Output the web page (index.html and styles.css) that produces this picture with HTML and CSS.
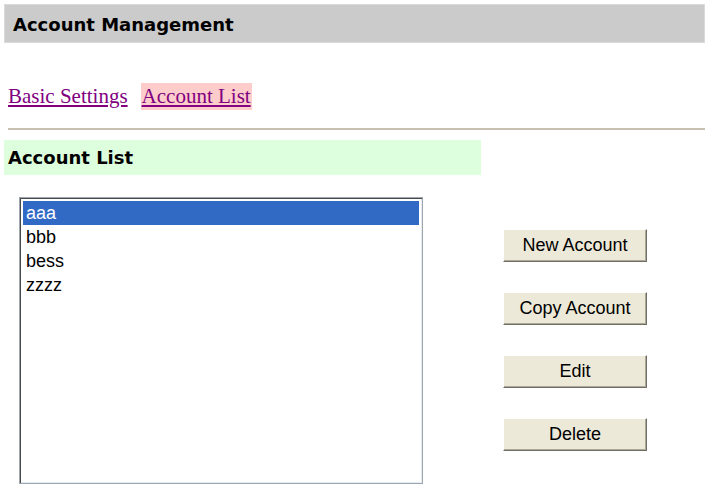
FILE: index.html
```html
<!DOCTYPE html>
<html>
<head>
<meta charset="utf-8">
<title>Account Management</title>
<link rel="stylesheet" href="styles.css">
</head>
<body>
<div class="header">Account Management</div>
<nav class="tabs">
  <a href="#" class="tab">Basic Settings</a>
  <a href="#" class="tab tab-active">Account List</a>
</nav>
<div class="rule"></div>
<div class="section-title">Account List</div>
<div class="content">
  <div class="listbox">
    <div class="item item-selected">aaa</div>
    <div class="item">bbb</div>
    <div class="item">bess</div>
    <div class="item">zzzz</div>
  </div>
  <div class="actions">
    <button class="btn">New Account</button>
    <button class="btn">Copy Account</button>
    <button class="btn">Edit</button>
    <button class="btn">Delete</button>
  </div>
</div>
</body>
</html>
```
FILE: styles.css
```css
html, body {
  margin: 0;
  padding: 0;
  background: #ffffff;
}

body {
  width: 707px;
  height: 489px;
  overflow: hidden;
  font-family: "DejaVu Sans", Verdana, sans-serif;
}

.header {
  box-sizing: border-box;
  margin: 4px 2px 0 4px;
  height: 39px;
  background: #cbcbcb;
  border: 1px solid #dadada;
  padding: 2px 0 0 8px;
  display: flex;
  align-items: center;
  font-weight: bold;
  font-size: 18px;
  color: #000;
}

.tabs {
  margin: 40px 0 0 8px;
  display: flex;
  gap: 13px;
  height: 27px;
}

.tab {
  display: inline-block;
  font-family: "Liberation Serif", "Times New Roman", serif;
  font-size: 21px;
  line-height: 27px;
  color: #800080;
  text-decoration: underline;
}

.tab-active {
  background: #ffcccc;
  padding: 0 1px;
}

.rule {
  margin: 18px 2px 0 8px;
  height: 2px;
  background: #c8c1b1;
}

.section-title {
  box-sizing: border-box;
  margin: 10px 0 0 4px;
  width: 477px;
  height: 35px;
  background: #ddffdd;
  padding-left: 4px;
  display: flex;
  align-items: center;
  font-weight: bold;
  font-size: 18px;
  color: #000;
}

.content {
  display: flex;
  align-items: flex-start;
  margin: 22px 0 0 19px;
}

.listbox {
  box-sizing: border-box;
  width: 404px;
  height: 287px;
  border: 1px solid #9ea6b0;
  box-shadow: inset 1px 1px 0 #4a4a4a, inset -1px -1px 0 #e4ecf2;
  padding: 3px 3px 0 3px;
  font-family: "Liberation Sans", Arial, sans-serif;
  font-size: 18px;
  color: #000;
}

.item {
  height: 24px;
  line-height: 24px;
  padding-left: 3px;
}

.item-selected {
  background: #316ac5;
  color: #ffffff;
}

.actions {
  display: flex;
  flex-direction: column;
  gap: 30px;
  margin: 32px 0 0 80px;
}

.btn {
  box-sizing: border-box;
  width: 144px;
  height: 33px;
  margin: 0;
  padding: 0;
  background: #ece9d8;
  border: 1px solid;
  border-color: #ffffff #716f64 #716f64 #ffffff;
  box-shadow: inset -1px -1px 0 #aca899;
  font-family: "Liberation Sans", Arial, sans-serif;
  font-size: 18px;
  color: #000;
  text-align: center;
}
```
